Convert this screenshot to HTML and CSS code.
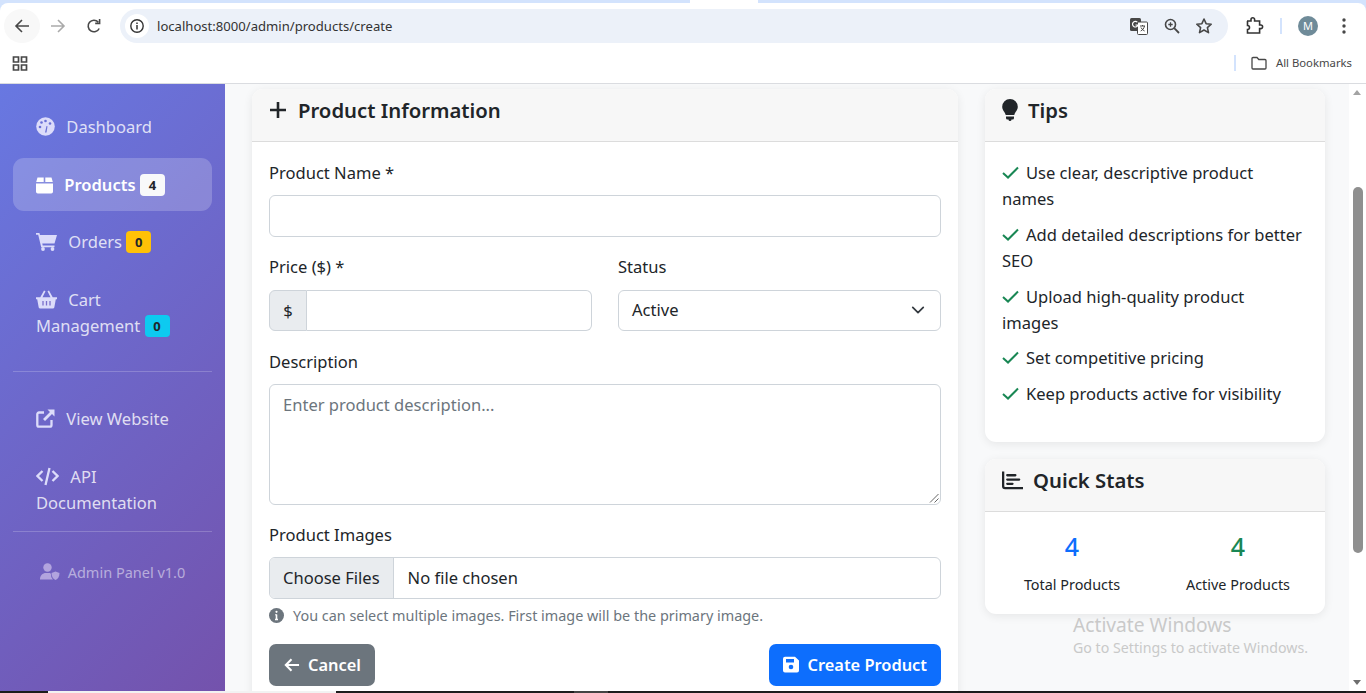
FILE: index.html
```html
<!DOCTYPE html>
<html lang="en">
<head>
    <meta charset="UTF-8">
    <title>Create Product</title>
    <link rel="stylesheet" href="styles.css">
</head>
<body>
    <div class="chrome-top">
        <div class="tabstrip"><span class="tab-piece"></span></div>
        <div class="toolbar">
            <div class="nav-btn nav-back">
                <svg width="18" height="18" viewBox="0 0 18 18"><path d="M16 9H3M9 3 3 9l6 6" fill="none" stroke="#474747" stroke-width="1.6"/></svg>
            </div>
            <div class="nav-btn">
                <svg width="18" height="18" viewBox="0 0 18 18"><path d="M2 9h13M9 3l6 6-6 6" fill="none" stroke="#aaaaaa" stroke-width="1.6"/></svg>
            </div>
            <div class="nav-btn">
                <svg width="18" height="18" viewBox="0 0 18 18"><path d="M14.2 11.5A5.8 5.8 0 1 1 13.2 5M14.6 2v4.4h-4.4" fill="none" stroke="#474747" stroke-width="1.6"/></svg>
            </div>
            <div class="omnibox">
                <div class="site-info">
                    <svg width="16" height="16" viewBox="0 0 16 16"><circle cx="8" cy="8" r="6.2" fill="none" stroke="#333" stroke-width="1.4"/><path d="M8 7v4.4M8 4.4v1.5" stroke="#333" stroke-width="1.5"/></svg>
                </div>
                <span class="url">localhost:8000/admin/products/create</span>
                <div class="omni-icons">
                    <svg width="20" height="20" viewBox="0 0 20 20"><rect x="1" y="2" width="11" height="13" rx="1.5" fill="#474747"/><rect x="8.5" y="6" width="10" height="12.5" rx="1" fill="#fff" stroke="#474747"/><path d="M11 10h5M13.5 9v1M15.5 10c-.6 2.600-2 4-3.800 5M12 11.500c.8 1.600 2 2.800 3.600 3.500" fill="none" stroke="#474747"/><path d="M8.300 6.200A2.800 2.800 0 1 0 9 9H6.500" fill="none" stroke="#fff" stroke-width="1.200"/></svg>
                    <svg width="18" height="18" viewBox="0 0 18 18"><circle cx="7.500" cy="7.500" r="5" fill="none" stroke="#474747" stroke-width="1.600"/><path d="M11.200 11.200 16 16" stroke="#474747" stroke-width="1.800"/><path d="M5.300 7.500h4.400M7.500 5.300v4.400" stroke="#474747" stroke-width="1.300"/></svg>
                    <svg width="18" height="18" viewBox="0 0 18 18"><path d="m9 2 2.100 4.700 5.100.5-3.800 3.400 1.100 5L9 13l-4.500 2.600 1.100-5-3.800-3.400 5.100-.5z" fill="none" stroke="#474747" stroke-width="1.600" stroke-linejoin="round"/></svg>
                </div>
            </div>
            <div class="tool-icons">
                <svg width="20" height="20" viewBox="0 0 20 20"><path d="M3 5h4V3.500a1.800 1.800 0 0 1 3.600 0V5h5v4h1.200a1.800 1.800 0 0 1 0 3.600H15.600V17H3.500v-3.500a1.800 1.800 0 0 0 0-4V5z" fill="none" stroke="#333" stroke-width="1.600"/></svg>
                <span class="tool-sep"></span>
                <span class="avatar">M</span>
                <svg class="dots" width="16" height="18" viewBox="0 0 16 18"><circle cx="8" cy="3" r="1.700" fill="#474747"/><circle cx="8" cy="9" r="1.700" fill="#474747"/><circle cx="8" cy="15" r="1.700" fill="#474747"/></svg>
            </div>
        </div>
    </div>
    <div class="bookmarks">
        <svg width="16" height="16" viewBox="0 0 16 16"><path d="M1.500 2h5v5h-5zM9.500 2h5v5h-5zM1.500 10h5v5h-5zM9.500 10h5v5h-5z" fill="none" stroke="#474747" stroke-width="1.700"/></svg>
        <div class="all-bookmarks">
            <span class="tool-sep book-sep"></span>
            <svg width="18" height="16" viewBox="0 0 18 16"><path d="M2 3.500a1 1 0 0 1 1-1h4l1.800 2H15a1 1 0 0 1 1 1V13a1 1 0 0 1-1 1H3a1 1 0 0 1-1-1z" fill="none" stroke="#474747" stroke-width="1.300"/></svg>
            <span>All Bookmarks</span>
        </div>
    </div>

    <div class="app">
        <aside class="sidebar">
            <ul class="side-nav">
                <li class="side-link">
                    <svg class="side-icon" width="19" height="19" viewBox="0 0 19 19"><circle cx="9.500" cy="9.500" r="9.300" fill="#dcdcfa"/><path d="m9 15.500 1.500-6.500 1 .3-1 6.200z" fill="#6a70d6"/><circle cx="4" cy="10" r="1.300" fill="#6a70d6"/><circle cx="5.500" cy="5.500" r="1.300" fill="#6a70d6"/><circle cx="9.500" cy="4" r="1.300" fill="#6a70d6"/><circle cx="14" cy="6.500" r="1.300" fill="#6a70d6"/></svg>
                    <span class="side-text">Dashboard</span>
                </li>
                <li class="side-link active">
                    <svg class="side-icon" width="17" height="17" viewBox="0 0 17 17"><path d="M1.500 0.500H7.700V5H0.200zM9.300 0.500H15.500L16.800 5H9.300zM0 6.400H17V14.800A1.800 1.800 0 0 1 15.200 16.500H1.800A1.800 1.800 0 0 1 0 14.800z" fill="#fff"/></svg>
                    <span class="side-text">Products</span> <span class="badge badge-light">4</span>
                </li>
                <li class="side-link">
                    <svg class="side-icon" width="21" height="19" viewBox="0 0 21 19"><path d="M0 1h3.400l.6 2H21l-2.500 8.500H6.300l.4 2H18.500v1.700H5.200L2.200 2.700H0z" fill="#dcdcfa"/><circle cx="7" cy="17" r="1.900" fill="#dcdcfa"/><circle cx="16.500" cy="17" r="1.900" fill="#dcdcfa"/></svg>
                    <span class="side-text">Orders</span> <span class="badge badge-warn">0</span>
                </li>
                <li class="side-link">
                    <svg class="side-icon" width="21" height="19" viewBox="0 0 21 19"><path d="M0 7.300h4.300L8 .5l1.500.8-3 6h8l-3-6 1.500-.8 3.700 6.800H21v2h-1.200l-1.500 8.200a1.500 1.500 0 0 1-1.500 1H4.200a1.500 1.500 0 0 1-1.500-1L1.200 9.300H0z" fill="#dcdcfa"/><path d="M7 11v4.500M10.500 11v4.500M14 11v4.500" stroke="#7a6fcb" stroke-width="1.300"/></svg>
                    <span class="side-text">Cart</span><br>Management <span class="badge badge-info">0</span>
                </li>
            </ul>
            <hr class="side-rule">
            <ul class="side-nav side-nav-extra">
                <li class="side-link">
                    <svg class="side-icon" width="19" height="19" viewBox="0 0 19 19"><path d="M8 3.500H3A1.700 1.700 0 0 0 1.300 5.200V16A1.700 1.700 0 0 0 3 17.700h10.800a1.700 1.700 0 0 0 1.700-1.700v-5" fill="none" stroke="#dcdcfa" stroke-width="2.300"/><path d="M11.500 .5H18.500V7.500L16 5 9 12 7 10l7-7z" fill="#dcdcfa"/></svg>
                    <span class="side-text">View Website</span>
                </li>
                <li class="side-link">
                    <svg class="side-icon" width="23" height="19" viewBox="0 0 23 19"><path d="M6.500 4 1.500 9l5 5M16.500 4l5 5-5 5" fill="none" stroke="#dcdcfa" stroke-width="2.300"/><path d="M13.500 1 9.500 18" stroke="#dcdcfa" stroke-width="2.300"/></svg>
                    <span class="side-text">API</span><br>Documentation
                </li>
            </ul>
            <hr class="side-rule rule-last">
            <div class="side-foot">
                <svg width="20" height="17" viewBox="0 0 20 17"><circle cx="7.500" cy="4.500" r="4.200" fill="#b2a4de"/><path d="M0 16.500c0-4 2.500-6.500 6-6.500h3c1.500 0 2 .5 2 1.500 0 2 .5 3.500 2 5z" fill="#b2a4de"/><path d="M15.500 8.500l4 1.500c0 3.500-1.500 6-4 7-2.500-1-4-3.500-4-7z" fill="#b2a4de"/></svg>
                <span>Admin Panel v1.0</span>
            </div>
        </aside>

        <main class="content">
            <div class="col-main">
                <section class="card card-form">
                    <div class="card-header">
                        <svg width="18" height="18" viewBox="0 0 18 18"><path d="M9 1v16M1 9h16" stroke="#212529" stroke-width="2.600"/></svg>
                        <h5>Product Information</h5>
                    </div>
                    <form class="card-body">
                        <div class="field">
                            <label>Product Name *</label>
                            <div class="input"></div>
                        </div>
                        <div class="field-row">
                            <div class="field">
                                <label>Price ($) *</label>
                                <div class="input-group">
                                    <span class="addon">$</span>
                                    <div class="input input-end"></div>
                                </div>
                            </div>
                            <div class="field">
                                <label>Status</label>
                                <div class="input select">
                                    <span>Active</span>
                                    <svg width="14" height="14" viewBox="0 0 16 16"><path d="m2 5 6 6 6-6" fill="none" stroke="#343a40" stroke-width="2" stroke-linecap="round" stroke-linejoin="round"/></svg>
                                </div>
                            </div>
                        </div>
                        <div class="field">
                            <label>Description</label>
                            <div class="input textarea">
                                <span>Enter product description...</span>
                                <svg class="grip" width="10" height="10" viewBox="0 0 10 10"><path d="M9.500 1 1 9.500M9.500 5.500 5.500 9.500" stroke="#666" stroke-width="1"/></svg>
                            </div>
                        </div>
                        <div class="field">
                            <label>Product Images</label>
                            <div class="input file">
                                <span class="file-btn">Choose Files</span>
                                <span class="file-name">No file chosen</span>
                            </div>
                            <div class="help">
                                <svg width="15" height="15" viewBox="0 0 15 15"><circle cx="7.500" cy="7.500" r="7.500" fill="#6c757d"/><path d="M7.500 6.500v5M6 11.500h3M6.300 6.700h1.200" stroke="#fff" stroke-width="1.600"/><circle cx="7.500" cy="3.800" r="1.100" fill="#fff"/></svg>
                                <span>You can select multiple images. First image will be the primary image.</span>
                            </div>
                        </div>
                        <div class="form-actions">
                            <span class="btn btn-grey">
                                <svg width="17" height="16" viewBox="0 0 18 16"><path d="M17 8H3M9 2 3 8l6 6" fill="none" stroke="#fff" stroke-width="2.200"/></svg>
                                Cancel
                            </span>
                            <span class="btn btn-blue">
                                <svg width="16" height="17" viewBox="0 0 16 17"><path d="M2 .8h10L16 4.500V14.500a2 2 0 0 1-2 2H2a2 2 0 0 1-2-2V2.800a2 2 0 0 1 2-2z" fill="#fff"/><rect x="3" y="3" width="8" height="3.500" fill="#0d6efd"/><circle cx="8" cy="11" r="2.300" fill="#0d6efd"/></svg>
                                Create Product
                            </span>
                        </div>
                    </form>
                </section>
            </div>
            <div class="col-side">
                <section class="card">
                    <div class="card-header">
                        <svg width="16" height="22" viewBox="0 0 16 22"><path d="M8 0a7.800 7.800 0 0 0-7.800 7.800c0 3.400 2.600 5 3.500 8.200h8.600c.9-3.200 3.500-4.800 3.500-8.200A7.800 7.800 0 0 0 8 0z" fill="#212529"/><path d="M4 17.500h8v1.500a1.500 1.500 0 0 1-1.500 1.500H9.500a1.500 1.500 0 0 1-3 0H5.500A1.500 1.500 0 0 1 4 19z" fill="#212529"/></svg>
                        <h5>Tips</h5>
                    </div>
                    <ul class="tips">
                        <li><svg class="check" width="17" height="13" viewBox="0 0 17 13"><path d="m1 7 5 4.500L16 1.500" fill="none" stroke="#198754" stroke-width="2"/></svg>Use clear, descriptive product names</li>
                        <li><svg class="check" width="17" height="13" viewBox="0 0 17 13"><path d="m1 7 5 4.500L16 1.500" fill="none" stroke="#198754" stroke-width="2"/></svg>Add detailed descriptions for better SEO</li>
                        <li><svg class="check" width="17" height="13" viewBox="0 0 17 13"><path d="m1 7 5 4.500L16 1.500" fill="none" stroke="#198754" stroke-width="2"/></svg>Upload high-quality product images</li>
                        <li><svg class="check" width="17" height="13" viewBox="0 0 17 13"><path d="m1 7 5 4.500L16 1.500" fill="none" stroke="#198754" stroke-width="2"/></svg>Set competitive pricing</li>
                        <li><svg class="check" width="17" height="13" viewBox="0 0 17 13"><path d="m1 7 5 4.500L16 1.500" fill="none" stroke="#198754" stroke-width="2"/></svg>Keep products active for visibility</li>
                    </ul>
                </section>
                <section class="card card-stats">
                    <div class="card-header">
                        <svg width="21" height="19" viewBox="0 0 22 19"><path d="M1.200 0v15.500a2 2 0 0 0 2 2H22" fill="none" stroke="#212529" stroke-width="2.400"/><path d="M5.500 4H14M5.500 8.500H18M5.500 13H11" stroke="#212529" stroke-width="2.400" stroke-linecap="round"/></svg>
                        <h5>Quick Stats</h5>
                    </div>
                    <div class="stats">
                        <div class="stat"><strong class="num-blue">4</strong><small>Total Products</small></div>
                        <div class="stat"><strong class="num-green">4</strong><small>Active Products</small></div>
                    </div>
                </section>
                <div class="activate">
                    <div class="activate-title">Activate Windows</div>
                    <div>Go to Settings to activate Windows.</div>
                </div>
            </div>
        </main>

        <div class="scrollbar">
            <span class="arrow-up"></span>
            <span class="scroll-thumb"></span>
            <span class="arrow-down"></span>
        </div>
    </div>
    <div class="taskbar">
        <span class="task-black task-a"></span>
        <span class="task-light"></span>
        <span class="task-black task-b"></span>
        <span class="task-grey"></span>
        <span class="task-black task-c"></span>
    </div>
</body>
</html>
```

FILE: styles.css
```css
* {
    box-sizing: border-box;
}
html, body {
    margin: 0;
    height: 693px;
    overflow: hidden;
}
body {
    display: flex;
    flex-direction: column;
    font-family: "Noto Sans", "Open Sans", sans-serif;
    color: #212529;
    background: #fff;
}
ul {
    list-style: none;
    margin: 0;
    padding: 0;
}

/* browser chrome */
.chrome-top {
    background: #d3e3fd;
}
.tabstrip {
    height: 3px;
    position: relative;
}
.tab-piece {
    position: absolute;
    left: 690px;
    top: 0;
    width: 68px;
    height: 3px;
    background: #fff;
}
.toolbar {
    height: 44px;
    display: flex;
    align-items: center;
    padding: 2px 14px 0 4px;
    background: #fff;
    border-radius: 8px 8px 0 0;
}
.nav-btn {
    width: 36px;
    height: 34px;
    display: flex;
    align-items: center;
    justify-content: center;
}
.nav-back {
    border-radius: 50%;
    background: #f8f8f8;
}
.omnibox {
    width: 1108px;
    height: 34px;
    margin-left: 8px;
    margin-right: 8px;
    padding: 0 15px 0 5px;
    border-radius: 17px;
    background: #ecf1f9;
    display: flex;
    align-items: center;
}
.site-info {
    width: 24px;
    height: 24px;
    border-radius: 50%;
    background: #fff;
    display: flex;
    align-items: center;
    justify-content: center;
}
.url {
    margin-left: 8px;
    font-size: 13.1px;
    color: #333;
}
.omni-icons {
    margin-left: auto;
    display: flex;
    align-items: center;
    gap: 14px;
}
.tool-icons {
    flex: 1;
    display: flex;
    align-items: center;
    gap: 16px;
    padding-left: 8px;
}
.dots {
    margin-left: 2px;
}
.tool-sep {
    width: 2px;
    height: 16px;
    background: #d3e3fd;
}
.avatar {
    width: 20px;
    height: 20px;
    border-radius: 50%;
    background: #6f8b99;
    color: #fff;
    font-size: 11px;
    line-height: 20px;
    text-align: center;
}
.bookmarks {
    height: 37px;
    padding: 0 14px 5px 12px;
    display: flex;
    align-items: center;
    justify-content: space-between;
    border-bottom: 1px solid #dadce0;
}
.all-bookmarks {
    display: flex;
    align-items: center;
    gap: 8px;
    font-size: 11.3px;
    color: #474747;
}
.book-sep {
    margin-right: 6px;
}

/* app */
.app {
    flex: 1;
    min-height: 0;
    display: flex;
}
.sidebar {
    width: 225px;
    flex: none;
    padding: 16.5px 13px 0;
    background: linear-gradient(135deg, #667eea -16%, #764ba2 119%);
    color: rgba(255, 255, 255, .8);
    font-size: 16.55px;
    line-height: 26px;
}
.side-nav {
    display: flex;
    flex-direction: column;
    gap: 5px;
}
.side-nav-extra {
    gap: 6px;
}
.side-link {
    padding: 13.4px 23px;
    border-radius: 11px;
}
.side-link.active {
    color: #fff;
    font-weight: 600;
    background: rgba(255, 255, 255, .2);
}
.side-icon {
    vertical-align: -3px;
}
.side-text {
    margin-left: 7px;
}
.badge {
    display: inline-block;
    min-width: 25px;
    padding: 0 7px;
    border-radius: 4px;
    font-size: 13px;
    font-weight: 700;
    line-height: 22px;
    text-align: center;
    color: #212529;
    vertical-align: 1px;
}
.badge-light {
    background: #f8f9fa;
}
.badge-warn {
    background: #ffc107;
}
.badge-info {
    background: #0dcaf0;
}
.side-rule {
    margin: 18.5px 0 20px;
    border: 0;
    border-top: 1px solid rgba(255, 255, 255, .2);
}
.rule-last {
    margin-top: 1px;
}
.side-foot {
    margin-top: 27px;
    text-align: center;
    font-size: 14.5px;
    color: rgba(255, 255, 255, .5);
    display: flex;
    justify-content: center;
    align-items: center;
    gap: 8px;
}

.content {
    flex: 1;
    min-width: 0;
    padding: 5px 24px 0 27px;
    display: flex;
    gap: 27px;
    background: #f8f9fa;
    overflow: hidden;
}
.col-main {
    width: 706px;
    flex: none;
}
.col-side {
    flex: 1;
    display: flex;
    flex-direction: column;
    gap: 17px;
    position: relative;
}
.card {
    background: #fff;
    border-radius: 11px;
    box-shadow: 0 2px 10px rgba(0, 0, 0, .08);
    overflow: hidden;
}
.card-form {
    height: 640px;
}
.card-header {
    height: 53px;
    padding: 0 17px 10px;
    display: flex;
    align-items: center;
    gap: 10px;
    background: #f7f7f7;
    border-bottom: 1px solid #dcdcdc;
}
.card-form .card-header {
    gap: 11px;
}
.card-header h5 {
    margin: 0;
    font-size: 20.3px;
    font-weight: 600;
}
.card-body {
    padding: 18px 17px 0;
}
.field {
    margin-bottom: 17.6px;
}
.field label {
    display: block;
    font-size: 16.55px;
    line-height: 26.4px;
    margin-bottom: 8.8px;
}
.input {
    height: 41.6px;
    background: #fff;
    border: 1px solid #ced4da;
    border-radius: 6px;
    font-size: 16.55px;
    line-height: 26.4px;
}
.field-row {
    display: grid;
    grid-template-columns: 1fr 1fr;
    gap: 26px;
}
.input-group {
    display: flex;
}
.addon {
    width: 38px;
    height: 41.6px;
    flex: none;
    background: #e9ecef;
    border: 1px solid #ced4da;
    border-radius: 6px 0 0 6px;
    font-size: 16.55px;
    line-height: 39.6px;
    text-align: center;
}
.input-end {
    flex: 1;
    border-left: 0;
    border-radius: 0 6px 6px 0;
}
.select {
    display: flex;
    align-items: center;
    justify-content: space-between;
    padding: 0 15px 0 13px;
}
.textarea {
    height: 120.6px;
    padding: 7px 13px;
    color: #6c757d;
    position: relative;
}
.grip {
    position: absolute;
    right: 1px;
    bottom: 1px;
}
.file {
    display: flex;
    align-items: center;
    overflow: hidden;
}
.file-btn {
    height: 100%;
    padding: 0 13px;
    display: flex;
    align-items: center;
    background: #e9ecef;
    border-right: 1px solid #ced4da;
}
.file-name {
    margin-left: 14px;
}
.help {
    margin-top: 6px;
    display: flex;
    align-items: center;
    gap: 9px;
    font-size: 14.4px;
    line-height: 21px;
    color: #6c757d;
}
.form-actions {
    display: flex;
    justify-content: space-between;
    margin-top: 18px;
}
.btn {
    height: 42px;
    padding: 0 14px;
    display: flex;
    align-items: center;
    gap: 8px;
    border-radius: 7px;
    font-size: 16.4px;
    font-weight: 600;
    color: #fff;
}
.btn-grey {
    background: #6c757d;
}
.btn-blue {
    background: #0d6efd;
}
.tips {
    padding: 18px 21px 26px 17px;
    font-size: 16.55px;
    line-height: 26.4px;
}
.tips li {
    margin-bottom: 9px;
}
.check {
    margin-right: 7px;
}
.card-stats .stats {
    display: grid;
    grid-template-columns: 1fr 1fr;
    padding: 17px 4px 19px;
    text-align: center;
}
.stat strong {
    display: block;
    font-size: 25px;
    font-weight: 500;
    line-height: 34px;
    margin-bottom: 11px;
}
.stat small {
    display: block;
    font-size: 14.4px;
    line-height: 21px;
}
.num-blue {
    color: #0d6efd;
}
.num-green {
    color: #198754;
}
.activate {
    position: absolute;
    left: 88px;
    top: 523px;
    font-size: 14.2px;
    line-height: 18px;
    color: #c9c9c9;
    white-space: nowrap;
}
.activate-title {
    font-size: 19.2px;
    line-height: 26px;
    margin-bottom: 1px;
}
.scrollbar {
    width: 17px;
    flex: none;
    position: relative;
    background: #fff;
}
.arrow-up, .arrow-down {
    position: absolute;
    left: 4px;
    width: 0;
    height: 0;
    border-left: 4.5px solid transparent;
    border-right: 4.5px solid transparent;
}
.arrow-up {
    top: 6px;
    border-bottom: 5px solid #a3a3a3;
}
.arrow-down {
    bottom: 6px;
    border-top: 5px solid #6e6e6e;
}
.scroll-thumb {
    position: absolute;
    left: 4px;
    top: 103px;
    width: 10px;
    height: 366px;
    border-radius: 5px;
    background: #8f8f8f;
}
.taskbar {
    height: 2px;
    flex: none;
    display: flex;
    background: #1c1c1c;
}
.task-black {
    background: #1c1c1c;
}
.task-a {
    width: 48px;
}
.task-light {
    width: 288px;
    background: #f2f2f2;
}
.task-b {
    width: 238px;
}
.task-grey {
    width: 34px;
    background: #444;
}
.task-c {
    flex: 1;
}
```
